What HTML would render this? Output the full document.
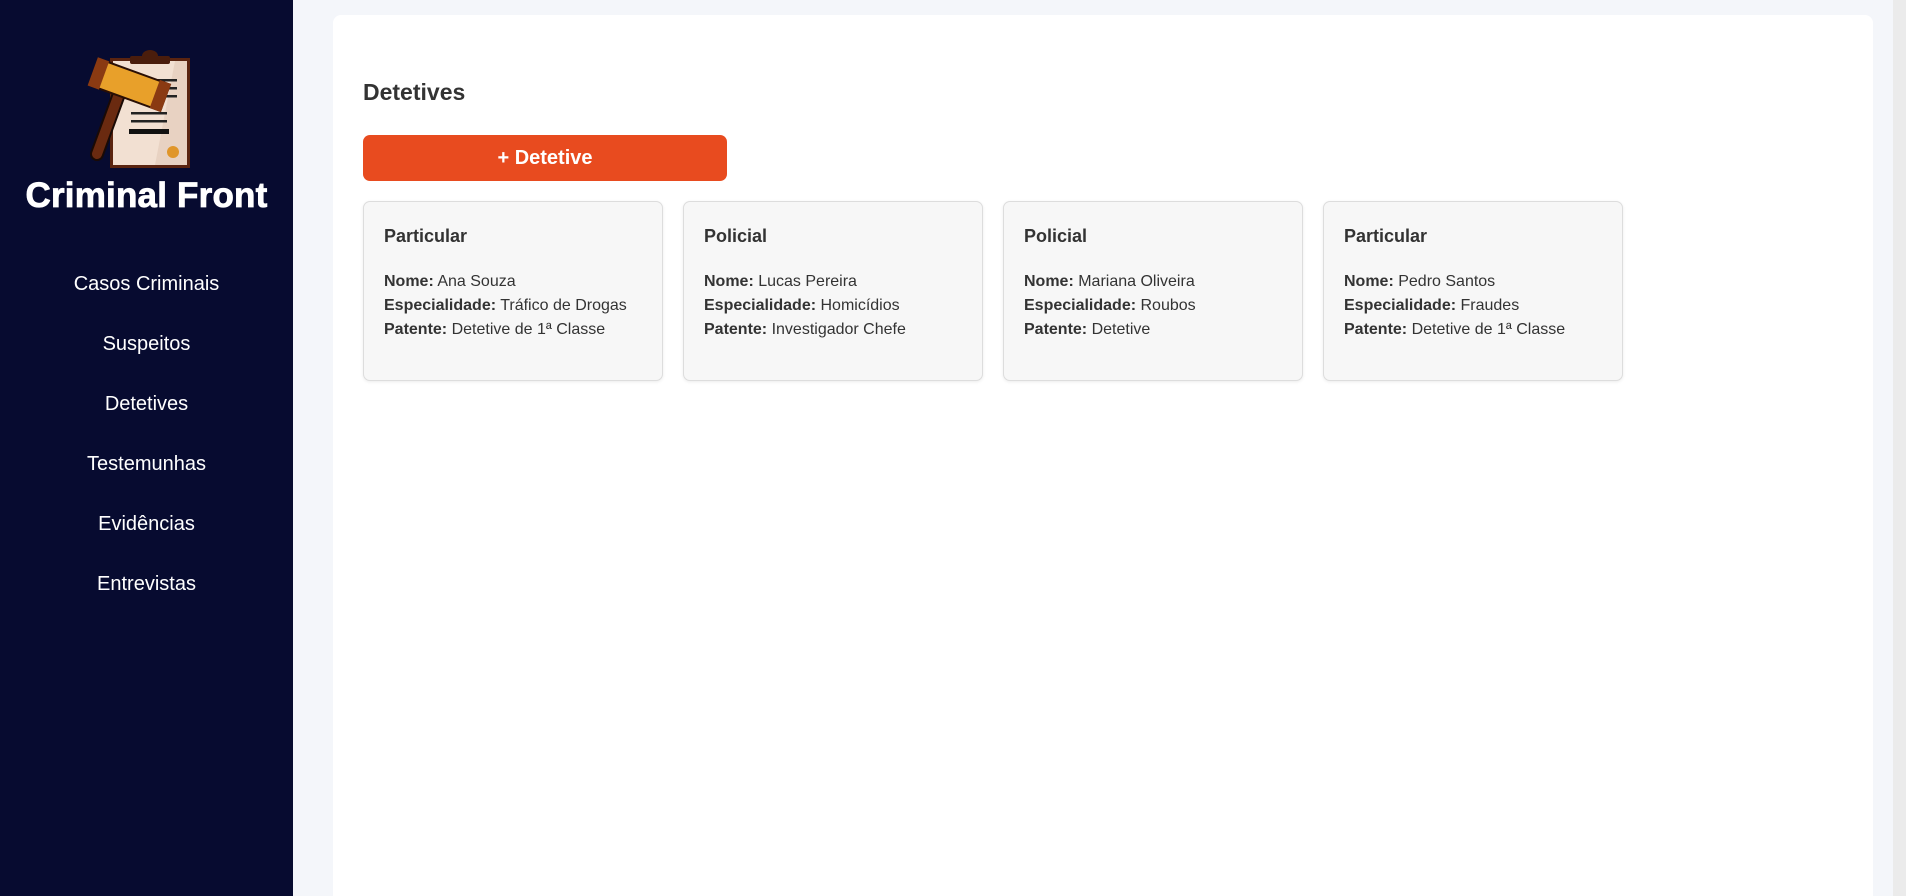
<!DOCTYPE html>
<html><head><meta charset="utf-8"><style>
*{box-sizing:border-box;margin:0;padding:0}
html,body{width:1906px;height:896px;overflow:hidden}
body{background:#f4f6fa;font-family:"Liberation Sans",Arial,sans-serif;position:relative}
.side{position:absolute;left:0;top:0;width:293px;height:896px;background:#070b30;color:#fff}
.logo{position:absolute;left:85px;top:46px}
.brand{position:absolute;left:0;width:293px;top:176px;text-align:center;font-weight:bold;font-size:35px;letter-spacing:0.2px;color:#fff;-webkit-text-stroke:0.8px #fff}
.nav a{position:absolute;left:0;width:293px;text-align:center;font-size:20px;color:#fff;text-decoration:none;line-height:24px}
.panel{position:absolute;left:333px;top:15px;width:1540px;height:881px;background:#fff;border-radius:8px 8px 0 0}
.scroll{position:absolute;left:1893px;top:0;width:13px;height:896px;background:#ebebeb}
h2{position:absolute;left:363px;top:79px;font-size:23px;color:#333;font-weight:bold}
.btn{position:absolute;left:363px;top:135px;width:364px;height:46px;background:#e84b1f;border-radius:7px;color:#fff;font-weight:bold;font-size:20px;text-align:center;line-height:46px}
.card{position:absolute;top:201px;width:300px;height:180px;background:#f7f7f7;border:1px solid #ddd;border-radius:7px;box-shadow:0 1px 3px rgba(0,0,0,.08);padding:22px 20px;color:#333}
.card h3{font-size:18px;font-weight:bold;margin-bottom:22px;line-height:24px}
.card p{font-size:16px;line-height:24px}
</style></head><body>
<div class="side">
<svg class="logo" width="110" height="125" viewBox="0 0 110 125">
<rect x="25" y="12" width="80" height="110" fill="#5a2410"/>
<rect x="28" y="15" width="74" height="104" fill="#f2e0d2"/>
<path d="M90 15 L102 15 L102 119 L70 119 Z" fill="#e8d2c2"/>
<rect x="45" y="10" width="40" height="8" rx="2" fill="#4a1d0c"/>
<path d="M57 10 a8 6 0 0 1 16 0z" fill="#4a1d0c"/>
<rect x="60" y="33" width="32" height="2.5" fill="#222"/>
<rect x="60" y="41" width="32" height="2.5" fill="#222"/>
<rect x="60" y="49" width="32" height="2.5" fill="#222"/>
<rect x="46" y="66" width="36" height="2.5" fill="#222"/>
<rect x="46" y="74" width="36" height="2.5" fill="#222"/>
<rect x="44" y="83" width="40" height="5" fill="#111"/>
<circle cx="88" cy="106" r="6" fill="#e0962a"/>
<path d="M34 48 L12 108" stroke="#1a0a05" stroke-width="14" stroke-linecap="round"/>
<path d="M34 48 L12 108" stroke="#6a2a10" stroke-width="10" stroke-linecap="round"/>
<g transform="rotate(20 45 40)"><rect x="5" y="24" width="78" height="30" fill="#2a0f05"/><rect x="7" y="26" width="74" height="26" fill="#e8a02a"/><rect x="5" y="24" width="12" height="30" fill="#8a3a12"/><rect x="71" y="24" width="12" height="30" fill="#8a3a12"/></g>
</svg>
<div class="brand">Criminal Front</div>
<div class="nav">
<a style="top:272px">Casos Criminais</a>
<a style="top:332px">Suspeitos</a>
<a style="top:392px">Detetives</a>
<a style="top:452px">Testemunhas</a>
<a style="top:512px">Evidências</a>
<a style="top:572px">Entrevistas</a>
</div>
</div>
<div class="panel"></div>
<div class="scroll"></div>
<h2>Detetives</h2>
<div class="btn">+ Detetive</div>
<div class="card" style="left:363px"><h3>Particular</h3><p><b>Nome:</b> Ana Souza</p><p><b>Especialidade:</b> Tráfico de Drogas</p><p><b>Patente:</b> Detetive de 1ª Classe</p></div>
<div class="card" style="left:683px"><h3>Policial</h3><p><b>Nome:</b> Lucas Pereira</p><p><b>Especialidade:</b> Homicídios</p><p><b>Patente:</b> Investigador Chefe</p></div>
<div class="card" style="left:1003px"><h3>Policial</h3><p><b>Nome:</b> Mariana Oliveira</p><p><b>Especialidade:</b> Roubos</p><p><b>Patente:</b> Detetive</p></div>
<div class="card" style="left:1323px"><h3>Particular</h3><p><b>Nome:</b> Pedro Santos</p><p><b>Especialidade:</b> Fraudes</p><p><b>Patente:</b> Detetive de 1ª Classe</p></div>
</body></html>
